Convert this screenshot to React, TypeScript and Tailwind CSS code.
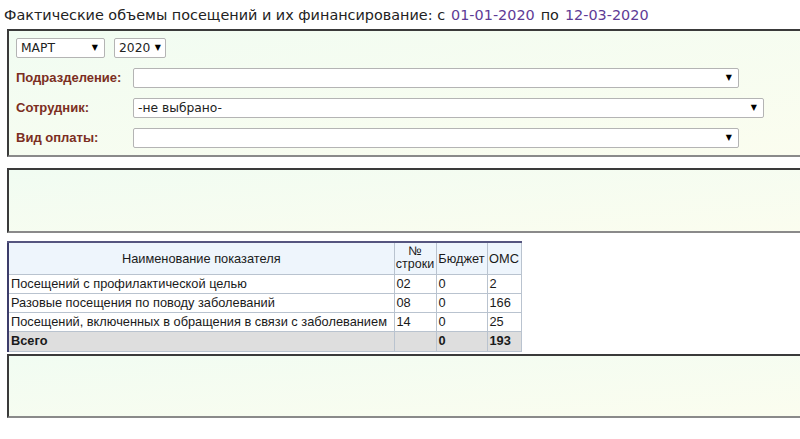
import React from 'react';

const panel =
  'ml-[7px] w-[800px] border-t-2 border-l-2 border-b-2 border-t-[#3a3a3a] border-l-[#3a3a3a] border-b-[#8a8a8a] bg-gradient-to-br from-[#f1fcf2] to-[#fbfdef]';

function FakeSelect({ value, className }: { value?: string; className: string }) {
  return (
    <div
      className={`flex h-[20px] items-center justify-between rounded-[2px] border border-[#b4b4b4] bg-white pl-[4px] ${className}`}
      style={{ fontFamily: '"DejaVu Sans", Verdana, sans-serif' }}
    >
      <span className="whitespace-nowrap text-[12.3px] text-[#222]">{value}</span>
      <span className="ml-[2px] text-[8px] leading-none text-black">▼</span>
    </div>
  );
}

const rows = [
  { name: 'Посещений с профилактической целью', no: '02', b: '0', o: '2' },
  { name: 'Разовые посещения по поводу заболеваний', no: '08', b: '0', o: '166' },
  { name: 'Посещений, включенных в обращения в связи с заболеванием', no: '14', b: '0', o: '25' },
];

const cell = 'whitespace-nowrap border border-[#b9c3cf] px-[2px] leading-[14px]';
const head = 'whitespace-nowrap border border-[#b9c3cf] border-t-2 border-t-[#55557f] px-0 font-normal';

export default function App() {
  return (
    <div className="h-[439px] w-[800px] overflow-hidden bg-white" style={{ fontFamily: '"Liberation Sans", Arial, sans-serif' }}>
      <div
        className="flex h-[29px] items-start pl-[4px] pt-[5px] text-[14.4px] text-[#222]"
        style={{ fontFamily: '"DejaVu Sans", Verdana, sans-serif' }}
      >
        <span>Фактические объемы посещений и их финансирование: с</span>
        <span className="ml-[6px] text-[#5e3b96]">01-01-2020</span>
        <span className="ml-[6px]">по</span>
        <span className="ml-[6px] text-[#5e3b96]">12-03-2020</span>
      </div>

      <div className={`${panel} h-[128px] pl-[7px] pt-[7px]`}>
        <div className="flex gap-[9px]">
          <FakeSelect value="МАРТ" className="w-[89px] pr-[6px]" />
          <FakeSelect value="2020" className="w-[52px] pr-[4px]" />
        </div>
        <div className="mt-[10px] flex flex-col gap-[10px]">
          {[
            { label: 'Подразделение:', w: 'w-[606px]', v: '' },
            { label: 'Сотрудник:', w: 'w-[631px]', v: '-не выбрано-' },
            { label: 'Вид оплаты:', w: 'w-[606px]', v: '' },
          ].map((r) => (
            <div key={r.label} className="flex items-center">
              <div className="w-[117px] text-[13px] font-bold text-[#7b2e22]">{r.label}</div>
              <FakeSelect value={r.v} className={`${r.w} pr-[6px]`} />
            </div>
          ))}
        </div>
      </div>

      <div className={`${panel} mt-[11px] h-[65px]`} />

      <table className="ml-[7px] mt-[8px] table-fixed border-collapse text-[12.8px] text-[#1a1a1a]">
        <thead>
          <tr className="h-[32px] bg-[#eef5fc]">
            <th className={`${head} w-[386px] border-l-2 border-l-[#3c3c6a]`}>Наименование показателя</th>
            <th className={`${head} w-[42px] text-[12.5px] leading-[13px]`}>
              №<br />строки
            </th>
            <th className={`${head} w-[51px]`}>Бюджет</th>
            <th className={`${head} w-[34px]`}>ОМС</th>
          </tr>
        </thead>
        <tbody>
          {rows.map((r) => (
            <tr key={r.no} className="h-[19px]">
              <td className={`${cell} border-l-2 border-l-[#3c3c6a]`}>{r.name}</td>
              <td className={cell}>{r.no}</td>
              <td className={cell}>{r.b}</td>
              <td className={cell}>{r.o}</td>
            </tr>
          ))}
          <tr className="h-[20px] bg-[#dedede] font-bold">
            <td className={`${cell} border-l-2 border-l-[#3c3c6a]`}>Всего</td>
            <td className={cell}></td>
            <td className={cell}>0</td>
            <td className={cell}>193</td>
          </tr>
        </tbody>
      </table>

      <div className={`${panel} mt-[2px] h-[64px]`} />
    </div>
  );
}
